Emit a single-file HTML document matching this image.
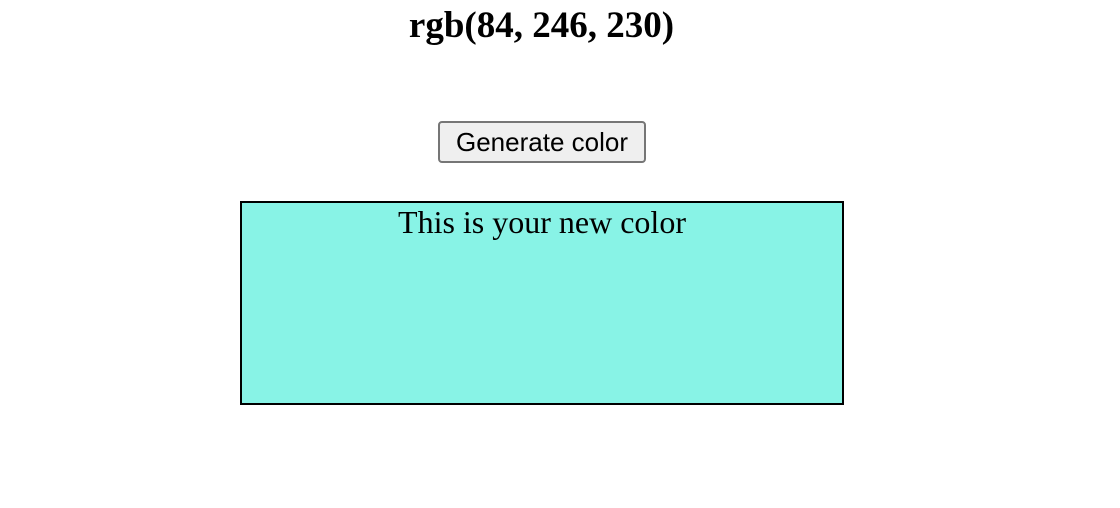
<!DOCTYPE html>
<html><head><style>
body{margin:0;width:1120px;height:508px;background:#fff;position:relative;font-family:"Liberation Serif",serif;}
h1{position:absolute;left:0;width:1083px;top:4px;margin:0;text-align:center;font-size:37px;font-weight:bold;line-height:44px;}
button{position:absolute;left:438px;top:121px;width:208px;height:42px;font-family:"Liberation Sans",sans-serif;font-size:26px;background:#efefef;border:2px solid #767676;border-radius:4px;padding:0;color:#000;}
.box{position:absolute;left:240px;top:201px;width:600px;height:200px;border:2px solid #000;background:#88f3e6;text-align:center;font-size:32px;line-height:38px;}
</style></head><body>
<h1>rgb(84, 246, 230)</h1>
<button>Generate color</button>
<div class="box">This is your new color</div>
</body></html>
